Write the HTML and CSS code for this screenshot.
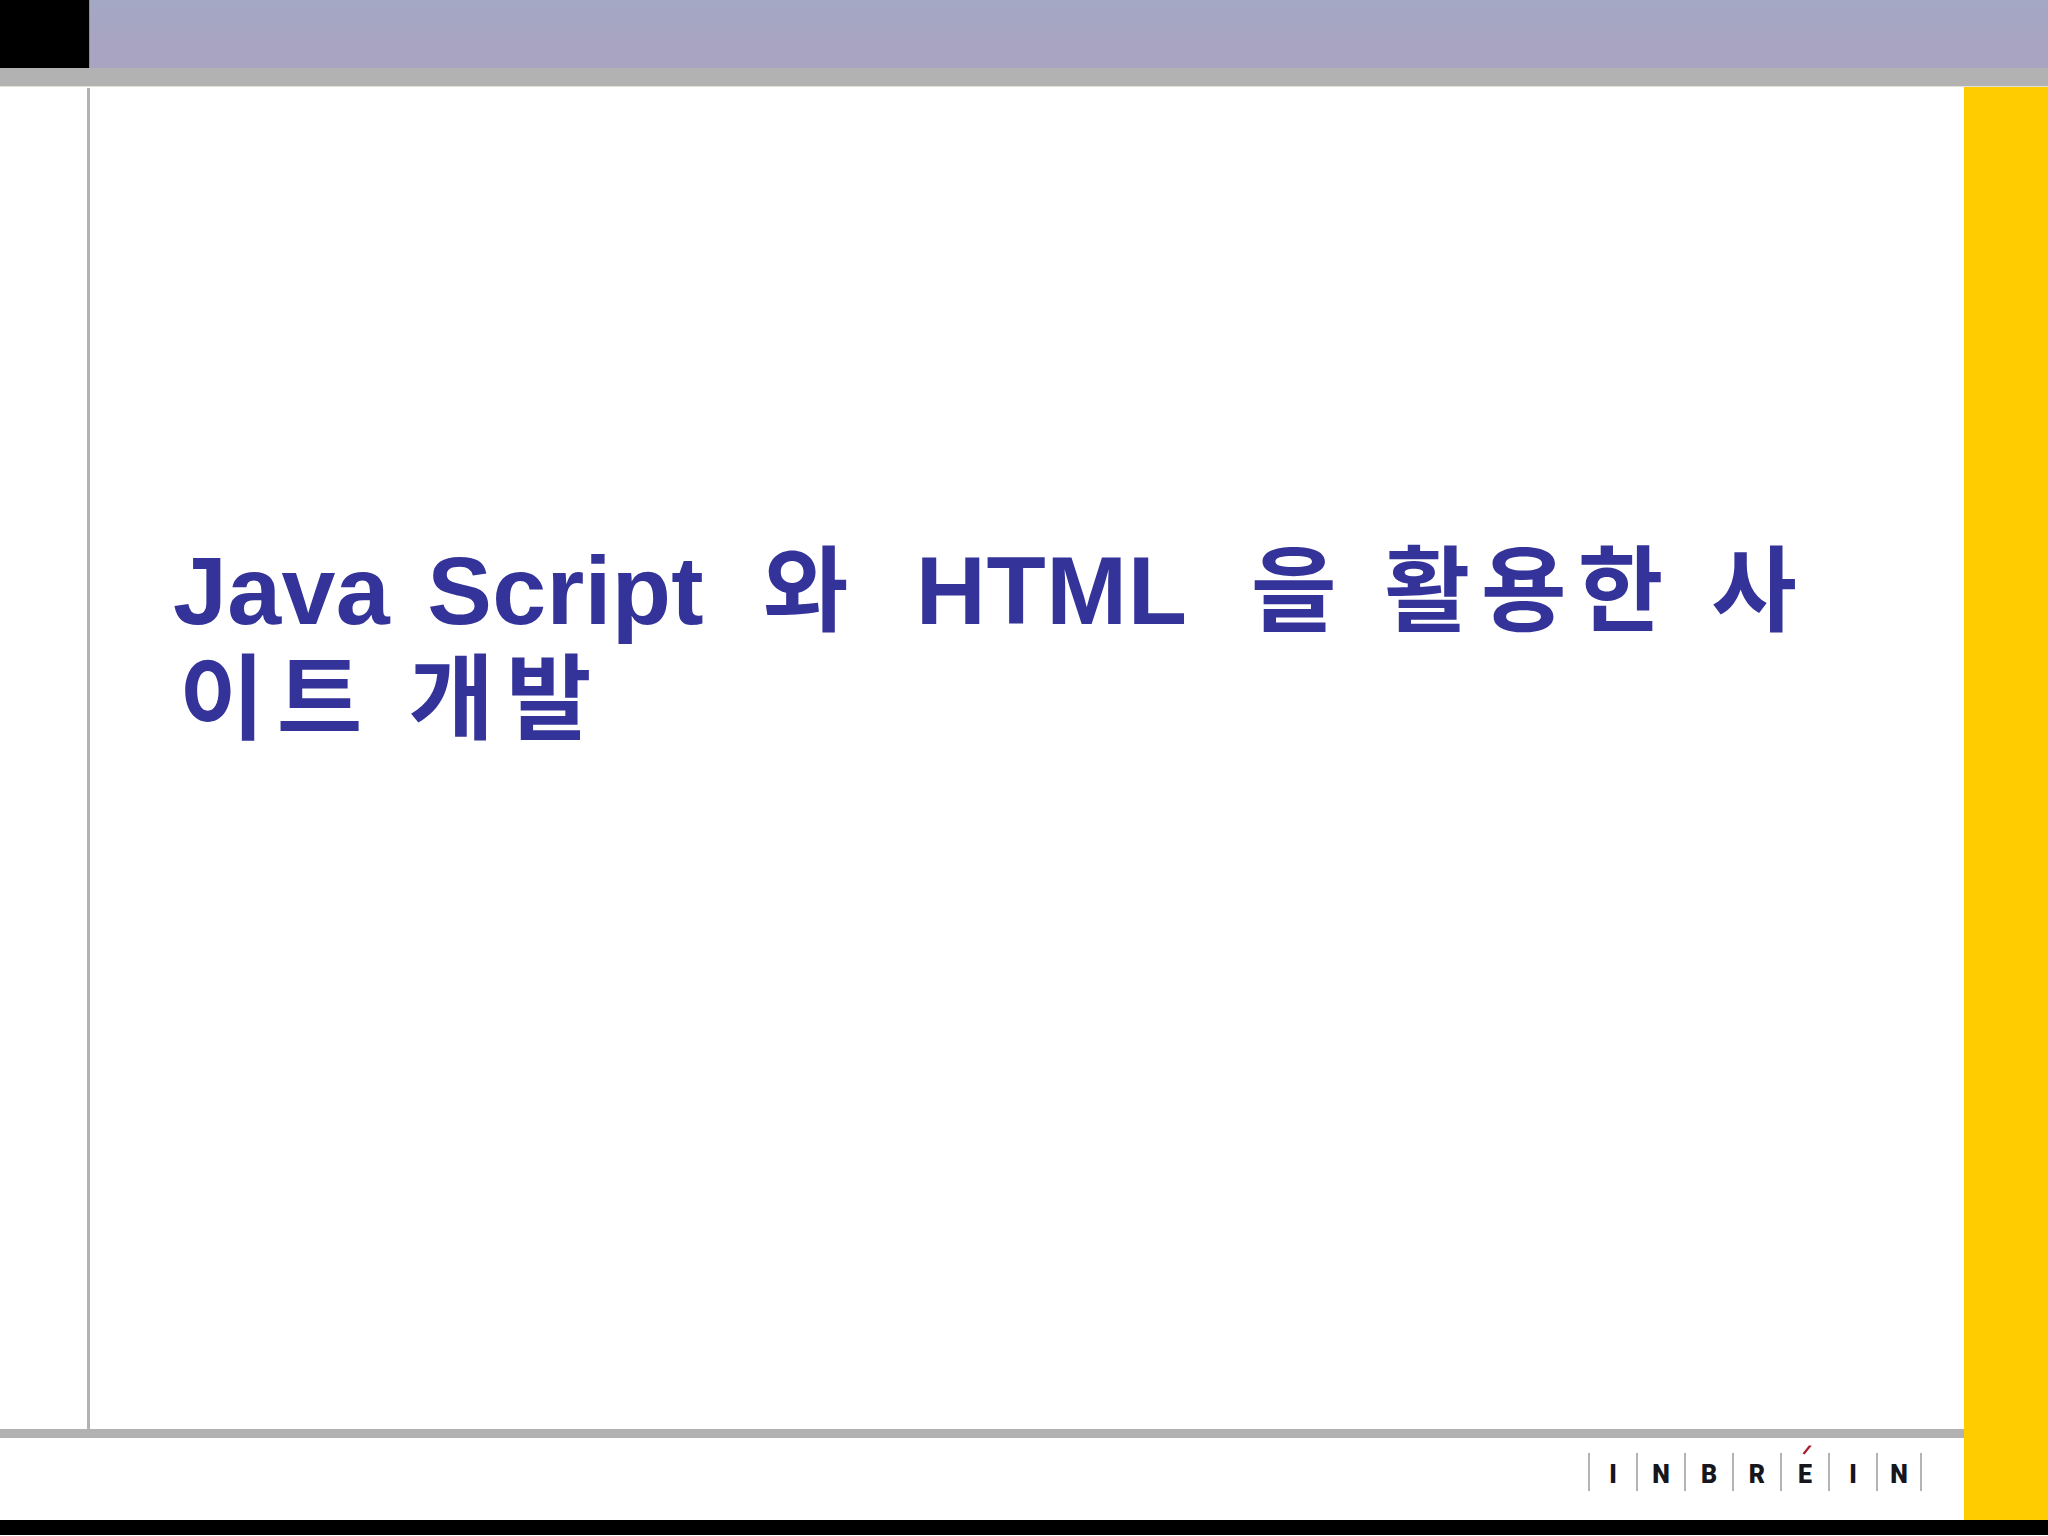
FILE: index.html
```html
<!DOCTYPE html>
<html lang="ko">
<head>
<meta charset="utf-8">
<title>Java Script 와 HTML 을 활용한 사이트 개발</title>
<link rel="stylesheet" href="styles.css">
</head>
<body>
<div class="slide">
  <header class="top">
    <div class="band">
      <div class="band-black"></div>
      <div class="band-tint"></div>
    </div>
    <div class="top-rule"></div>
  </header>
  <div class="middle">
    <div class="content">
      <main class="stage">
        <div class="rail"></div>
        <h1 class="title"><span class="name">Java Script</span>  <span class="ko ko-and">와</span>  HTML  <span class="ko ko-tail">을 활용한 사</span><br><span class="ko ko-line">이트 개발</span></h1>
      </main>
      <div class="bottom-rule"></div>
      <footer class="footer">
        <div class="logo">
          <span class="cell">I</span>
          <span class="cell">N</span>
          <span class="cell">B</span>
          <span class="cell">R</span>
          <span class="cell accented">E<svg class="acute" width="10" height="10" viewBox="0 0 10 10"><path d="M0.5 8.5 L6.8 0.5 L9.8 0.5 L2.6 9.5 Z"/></svg></span>
          <span class="cell">I</span>
          <span class="cell last">N</span>
        </div>
      </footer>
    </div>
    <aside class="accent"></aside>
  </div>
  <div class="base"></div>
</div>
</body>
</html>
```
FILE: styles.css
```css
html, body {
  margin: 0;
  padding: 0;
  background: #ffffff;
}

.slide {
  width: 2048px;
  height: 1536px;
  display: flex;
  flex-direction: column;
  overflow: hidden;
  background: #ffffff;
}

.band {
  display: flex;
  height: 68px;
}

.band-black {
  width: 89px;
  background: #000000;
  border-right: 1px solid #8f8f9c;
}

.band-tint {
  flex: 1;
  background: linear-gradient(180deg, #a3a8c4 0%, #a9a4c2 70%, #a9a4c2 100%);
}

.top-rule {
  height: 19px;
  background: #b2b2b2;
  border-bottom: 1px solid #e0e0d8;
  box-sizing: border-box;
}

.middle {
  flex: 1;
  display: flex;
  min-height: 0;
}

.content {
  flex: 1;
  display: flex;
  flex-direction: column;
  min-width: 0;
}

.stage {
  flex: 1;
  display: flex;
  min-height: 0;
  padding-top: 1px;
}

.rail {
  width: 3px;
  margin-left: 87px;
  background: #b2b2b2;
}

.title {
  margin: 449px 0 0 83px;
  width: 1720px;
  font-family: "Liberation Sans", "Noto Sans CJK KR", sans-serif;
  font-size: 97px;
  font-weight: 700;
  line-height: 108px;
  letter-spacing: 0.6px;
  color: #333399;
  white-space: pre-wrap;
}

.name {
  word-spacing: 10px;
  letter-spacing: 0.3px;
}

.ko {
  font-family: "Noto Sans CJK KR", "Liberation Sans", sans-serif;
  font-size: 93px;
  line-height: 0;
  letter-spacing: 12.1px;
}

.ko-and {
  padding-left: 4px;
}

.ko-tail {
  padding-left: 10px;
  letter-spacing: 11px;
}

.ko-line {
  padding-left: 6px;
  word-spacing: -4px;
}

.bottom-rule {
  height: 9px;
  background: #b2b2b2;
}

.footer {
  height: 82px;
  display: flex;
  justify-content: flex-end;
  padding: 15px 42px 0 0;
  box-sizing: border-box;
}

.logo {
  display: flex;
  height: 38px;
  border-left: 2px solid #b4b4b4;
}

.cell {
  position: relative;
  width: 46px;
  border-right: 2px solid #b4b4b4;
  text-align: center;
  font-family: "Roboto", "Liberation Sans", sans-serif;
  font-size: 25px;
  font-weight: 900;
  line-height: 44px;
  color: #16161c;
}

.cell.last {
  width: 42px;
}

.acute {
  position: absolute;
  left: 20px;
  top: -8px;
}

.acute path {
  fill: #a81f2e;
}

.accent {
  width: 84px;
  background: #ffcc00;
}

.base {
  height: 15px;
  margin-bottom: 1px;
  background: #000000;
}
```
